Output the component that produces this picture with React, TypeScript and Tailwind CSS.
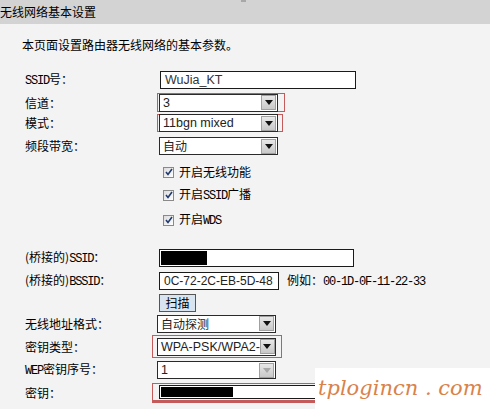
import React from "react";

const cjk = { fontFamily: '"Noto Sans CJK SC", sans-serif' };
const latin = { fontFamily: '"Liberation Sans", Arial, sans-serif' };

// SimSun-like half-width ascii
const M: React.FC<{ children: React.ReactNode }> = ({ children }) => (
  <span className="text-[12px] tracking-[-1.2px]" style={{ fontFamily: '"Liberation Mono", monospace' }}>
    {children}
  </span>
);

const Arrow: React.FC<{ disabled?: boolean }> = ({ disabled }) => (
  <div className="w-[15px] h-[15px] mr-px shrink-0 bg-gradient-to-b from-[#e8e8e8] to-[#c8c8c8] border border-[#a0a0a0] flex items-center justify-center">
    <svg width="8" height="5" viewBox="0 0 8 5">
      <path d="M0 0h8L4 5z" fill={disabled ? "#a8a8a8" : "#111"} />
    </svg>
  </div>
);

const Select: React.FC<{ value: string; width: number; disabled?: boolean; zh?: boolean }> = ({ value, width, disabled, zh }) => (
  <div
    className={`h-[18px] border border-[#2a2a2a] bg-white flex items-center text-[#222] ${zh ? "text-[12px]" : "text-[12.5px]"}`}
    style={{ width }}
  >
    <span className="flex-1 pl-[3px] leading-[16px] whitespace-nowrap" style={zh ? cjk : latin}>
      {value}
    </span>
    <Arrow disabled={disabled} />
  </div>
);

const Check: React.FC<{ children: React.ReactNode; mt: string }> = ({ children, mt }) => (
  <div className={`flex items-center h-[18px] pl-[163px] ${mt}`}>
    <div className="w-[11px] h-[11px] border border-[#8a8a8a] bg-gradient-to-br from-[#dcdcdc] to-[#ffffff] flex items-center justify-center">
      <svg width="8" height="8" viewBox="0 0 8 8">
        <path d="M1 4l2 2.5L7 1" stroke="#223a70" strokeWidth="1.6" fill="none" />
      </svg>
    </div>
    <span className="ml-[5px] text-[12px] text-black" style={cjk}>{children}</span>
  </div>
);

const Label: React.FC<{ children: React.ReactNode; w?: string }> = ({ children, w = "w-[160px]" }) => (
  <div className={`${w} shrink-0 pl-[25px] text-[12px] text-black`} style={cjk}>
    {children}
  </div>
);

export default function App() {
  return (
    <div className="relative w-[490px] h-[409px] overflow-hidden bg-[#f3f3f3]">
      <div className="h-[24px] bg-[#d3d3d3] flex items-center text-[12px] text-black relative" style={cjk}>
        无线网络基本设置
        <div className="absolute left-[241px] top-0 w-[5px] h-[2px] bg-[#a8a8a8]" />
      </div>

      <div className="pl-[22px] mt-[13px] text-[12px] text-black h-[16px] leading-[16px]" style={cjk}>
        本页面设置路由器无线网络的基本参数。
      </div>

      {/* SSID */}
      <div className="flex items-center h-[18px] mt-[18px]">
        <Label><M>SSID</M>号：</Label>
        <div className="w-[196px] h-[18px] border border-[#1a1a1a] bg-white flex items-center pl-[4px] text-[12.5px] text-[#333]" style={latin}>
          WuJia_KT
        </div>
      </div>

      {/* channel */}
      <div className="flex items-center h-[19px] mt-[4px]">
        <Label w="w-[157px]">信道：</Label>
        <div className="border border-[#c45a5a] pl-px pr-[6px] h-[19px] flex items-center">
          <Select value="3" width={119} />
        </div>
      </div>

      {/* mode */}
      <div className="flex items-center h-[18px] mt-[2px]">
        <Label w="w-[157px]">模式：</Label>
        <div className="border border-[#c45a5a] pl-px pr-[4px] h-[18px] flex items-center">
          <Select value="11bgn mixed" width={119} />
        </div>
      </div>

      {/* bandwidth */}
      <div className="flex items-center h-[18px] mt-[5px]">
        <Label w="w-[159px]">频段带宽：</Label>
        <Select value="自动" width={119} zh />
      </div>

      <Check mt="mt-[8px]">开启无线功能</Check>
      <Check mt="mt-[5px]">开启<M>SSID</M>广播</Check>
      <Check mt="mt-[7px]">开启<M>WDS</M></Check>

      {/* bridged ssid */}
      <div className="flex items-center h-[18px] mt-[20px]">
        <Label w="w-[159px]">(桥接的)<M>SSID</M>：</Label>
        <div className="w-[195px] h-[18px] border border-[#1a1a1a] bg-white flex items-center p-px">
          <div className="w-[46px] h-full bg-black" />
        </div>
      </div>

      {/* bridged bssid */}
      <div className="flex items-center h-[18px] mt-[5px]">
        <Label w="w-[159px]">(桥接的)<M>BSSID</M>：</Label>
        <div className="w-[120px] h-[18px] border border-[#1a1a1a] bg-white flex items-center pl-[4px] text-[12px] text-[#222]" style={latin}>
          0C-72-2C-EB-5D-48
        </div>
        <span className="ml-[8px] text-[12px] text-black" style={cjk}>
          例如：<M>00-1D-0F-11-22-33</M>
        </span>
      </div>

      {/* scan */}
      <div className="flex items-center h-[18px] mt-[4px] pl-[159px]">
        <button className="w-[37px] h-[18px] border border-[#555] bg-[#d9e4f1] text-[12px] text-black leading-none" style={cjk}>
          扫描
        </button>
      </div>

      {/* address format */}
      <div className="flex items-center h-[19px] mt-[2px]">
        <Label w="w-[157px]">无线地址格式：</Label>
        <Select value="自动探测" width={119} zh />
      </div>

      {/* key type */}
      <div className="flex items-center h-[23px] mt-[2px]">
        <Label w="w-[152px]">密钥类型：</Label>
        <div className="border border-[#c45a5a] pl-[4px] pr-[5px] h-[23px] flex items-center">
          <Select value="WPA-PSK/WPA2-" width={119} />
        </div>
      </div>

      {/* wep index */}
      <div className="flex items-center h-[18px] mt-[3px]">
        <Label w="w-[157px]"><M>WEP</M>密钥序号：</Label>
        <Select value="1" width={119} disabled />
      </div>

      {/* key */}
      <div className="flex items-center h-[19px] mt-[4px]">
        <Label w="w-[152px]">密钥：</Label>
        <div className="border border-[#c45a5a] border-b-[3px] border-b-[#c45a5a] w-[200px] h-[20px] flex items-center pl-[6px]">
          <div className="w-[196px] h-[14px] border border-[#1a1a1a] bg-white p-px">
            <div className="w-[72px] h-full bg-black" />
          </div>
        </div>
      </div>

      {/* watermark */}
      <div className="absolute left-[315px] top-[368px] w-[175px] h-[41px] bg-white flex items-center pl-[3px]">
        <span className="text-[21px] italic text-[#d9824a] whitespace-nowrap" style={{ fontFamily: '"DejaVu Serif", serif' }}>
          tplogincn . com
        </span>
      </div>
    </div>
  );
}
